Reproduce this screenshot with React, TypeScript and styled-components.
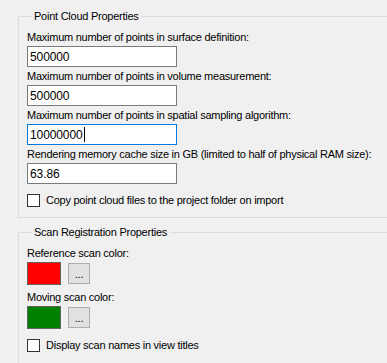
import styled, { createGlobalStyle } from "styled-components";

const GlobalStyle = createGlobalStyle`
  html, body {
    margin: 0;
    padding: 0;
    background: #f0f0f0;
  }

  body {
    font-family: "Segoe UI", "Liberation Sans", Arial, sans-serif;
    font-size: 11px;
    letter-spacing: -0.25px;
    color: #000;
  }
`;

interface TextBoxProps {
  value: string;
  focused?: boolean;
}

const TextBox = ({ value, focused }: TextBoxProps) => (
  <S.TextBox $focused={focused}>
    {value}
    {focused && <S.Caret />}
  </S.TextBox>
);

interface ColorRowProps {
  label: string;
  color: string;
}

const ColorRow = ({ label, color }: ColorRowProps) => (
  <S.Field>
    <S.Label>{label}</S.Label>
    <S.ColorLine>
      <S.Swatch $color={color} />
      <S.DotsButton>...</S.DotsButton>
    </S.ColorLine>
  </S.Field>
);

const App = () => {
  return (
    <S.Page>
      <GlobalStyle />

      <S.Group>
        <S.Legend>Point Cloud Properties</S.Legend>

        <S.Field>
          <S.Label>Maximum number of points in surface definition:</S.Label>
          <TextBox value="500000" />
        </S.Field>
        <S.Field>
          <S.Label>Maximum number of points in volume measurement:</S.Label>
          <TextBox value="500000" />
        </S.Field>
        <S.Field>
          <S.Label>Maximum number of points in spatial sampling algorithm:</S.Label>
          <TextBox value="10000000" focused />
        </S.Field>
        <S.Field>
          <S.Label>Rendering memory cache size in GB (limited to half of physical RAM size):</S.Label>
          <TextBox value="63.86" />
        </S.Field>

        <S.Check $gap={7}>
          <S.Box />
          <span>Copy point cloud files to the project folder on import</span>
        </S.Check>
      </S.Group>

      <S.Group $open>
        <S.Legend>Scan Registration Properties</S.Legend>

        <ColorRow label="Reference scan color:" color="#ff0000" />
        <ColorRow label="Moving scan color:" color="#008000" />

        <S.Check $gap={4}>
          <S.Box />
          <span>Display scan names in view titles</span>
        </S.Check>
      </S.Group>
    </S.Page>
  );
};

const S = {
  Page: styled.div`
    width: 387px;
    height: 363px;
    overflow: hidden;
    padding-top: 8px;
    box-sizing: border-box;
  `,

  Group: styled.fieldset<{ $open?: boolean }>`
    margin: ${({ $open }) => ($open ? "6px" : "0")} 0 0 18px;
    padding: 5px 0 ${({ $open }) => ($open ? "40px" : "9px")} 8px;
    min-width: 0;

    border: 1px solid #dcdcdc;
    border-right: none;
    ${({ $open }) => $open && "border-bottom: none;"}
  `,

  Legend: styled.legend`
    margin-left: 5px;
    padding: 0 3px 0 2px;
    line-height: 16px;
  `,

  Field: styled.div`
    display: flex;
    flex-direction: column;
    align-items: flex-start;
  `,

  Label: styled.div`
    line-height: 16px;
    margin-bottom: 1px;
    white-space: nowrap;
  `,

  TextBox: styled.div<{ $focused?: boolean }>`
    display: flex;
    align-items: center;

    width: 150px;
    height: 21px;
    box-sizing: border-box;
    margin-bottom: 1px;
    padding-left: 2px;

    background: #fff;
    border: 1px solid ${({ $focused }) => ($focused ? "#0078d7" : "#7a7a7a")};
    font-size: 12px;
    letter-spacing: -0.1px;
    line-height: 16px;
  `,

  Caret: styled.span`
    display: inline-block;
    width: 1px;
    height: 15px;
    margin-left: 1px;
    background: #000;
  `,

  Check: styled.label<{ $gap: number }>`
    display: flex;
    align-items: center;
    gap: 6px;

    margin-top: ${({ $gap }) => $gap}px;
    line-height: 16px;
  `,

  Box: styled.span`
    width: 13px;
    height: 13px;
    box-sizing: border-box;

    background: #fff;
    border: 1px solid #333;
  `,

  ColorLine: styled.div`
    display: flex;
    align-items: center;
    gap: 7px;

    margin-bottom: 4px;
  `,

  Swatch: styled.div<{ $color: string }>`
    width: 34px;
    height: 23px;
    box-sizing: border-box;

    background: ${({ $color }) => $color};
    border: 1px solid #646464;
  `,

  DotsButton: styled.div`
    display: flex;
    align-items: flex-end;
    justify-content: center;

    width: 22px;
    height: 21px;
    box-sizing: border-box;
    padding-bottom: 3px;

    background: #e1e1e1;
    border: 1px solid #adadad;
    font-size: 11px;
    line-height: 11px;
  `,
};

export default App;
